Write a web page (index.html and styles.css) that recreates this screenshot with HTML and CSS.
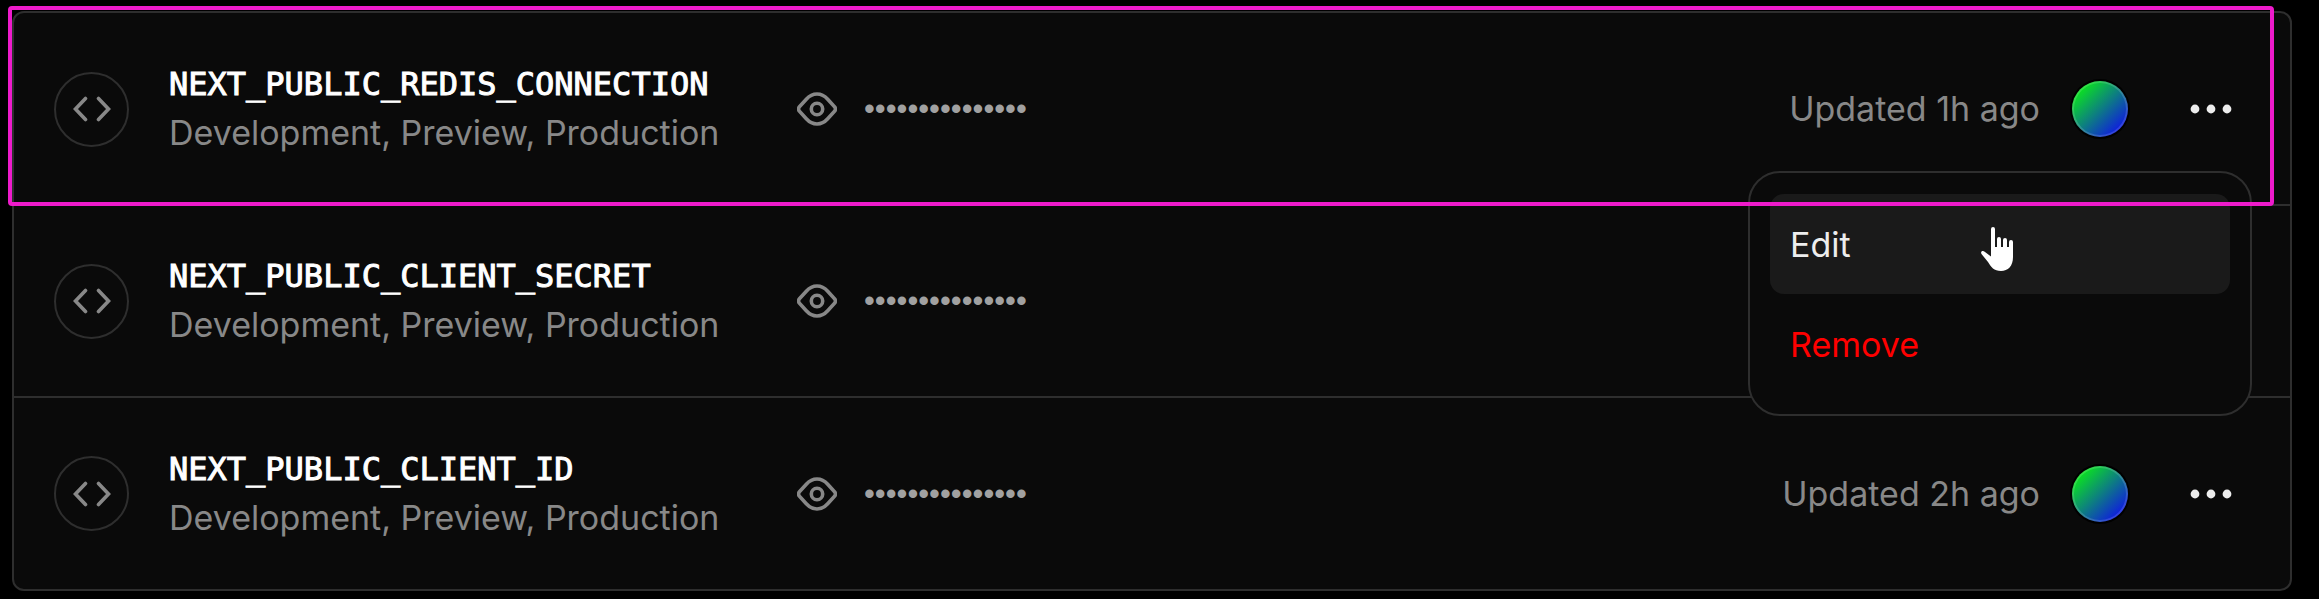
FILE: index.html
```html
<!DOCTYPE html>
<html lang="en">
<head>
<meta charset="utf-8">
<title>Environment Variables</title>
<link rel="stylesheet" href="styles.css">
</head>
<body>
<svg class="sprite" aria-hidden="true">
  <symbol id="code" viewBox="0 0 38 26"><path d="M12.500 2.500 L2.500 13 L12.500 23.500 M25.500 2.500 L35.500 13 L25.500 23.500" fill="none" stroke="currentColor" stroke-width="3.600" stroke-linejoin="miter" stroke-linecap="round"/></symbol>
  <symbol id="eye" viewBox="0 0 40 34"><path d="M2.200 15 L9.300 7.200 Q14 2 20 2 Q26 2 30.700 7.200 L37.800 15 Q39 17 37.800 19 L30.700 26.800 Q26 32 20 32 Q14 32 9.300 26.800 L2.200 19 Q1 17 2.200 15 Z" fill="none" stroke="currentColor" stroke-width="3.600"/><circle cx="20" cy="17" r="5.700" fill="none" stroke="currentColor" stroke-width="3.600"/></symbol>
  <symbol id="more" viewBox="0 0 42 10"><circle cx="5" cy="5" r="4.400" fill="currentColor"/><circle cx="21" cy="5" r="4.400" fill="currentColor"/><circle cx="37" cy="5" r="4.400" fill="currentColor"/></symbol>
</svg>
<ul class="env-list">
  <li class="env-row">
    <span class="badge"><svg class="icon-code"><use href="#code"/></svg></span>
    <div class="info">
      <div class="name">NEXT_PUBLIC_REDIS_CONNECTION</div>
      <div class="targets">Development, Preview, Production</div>
    </div>
    <div class="value">
      <button class="icon-button" type="button" aria-label="Reveal value"><svg class="icon-eye"><use href="#eye"/></svg></button>
      <span class="mask">•••••••••••••••</span>
    </div>
    <div class="meta">
      <span class="updated">Updated 1h ago</span>
      <span class="avatar"></span>
      <button class="icon-button" type="button" aria-label="More options"><svg class="icon-more"><use href="#more"/></svg></button>
    </div>
    <div class="menu" role="menu">
      <button class="menu-item active" type="button" role="menuitem">Edit</button>
      <button class="menu-item danger" type="button" role="menuitem">Remove</button>
      <svg class="pointer" viewBox="0 0 34 46" aria-hidden="true"><path d="M11 3 Q11 1 13 1 Q15 1 15 3 V21 H17 V13 Q17 11 19 11 Q21 11 21 13 V21 H23 V14 Q23 12 25 12 Q27 12 27 14 V21 H29 V16 Q29 14 31 14 Q33 14 33 16 V31 C33 40 28 45 21 45 C14 45 11 41 8 36 L1.500 28 C0 25 3 24 5 26 L11 30.500 Z"/></svg>
    </div>
    <div class="highlight"></div>
  </li>
  <li class="env-row">
    <span class="badge"><svg class="icon-code"><use href="#code"/></svg></span>
    <div class="info">
      <div class="name">NEXT_PUBLIC_CLIENT_SECRET</div>
      <div class="targets">Development, Preview, Production</div>
    </div>
    <div class="value">
      <button class="icon-button" type="button" aria-label="Reveal value"><svg class="icon-eye"><use href="#eye"/></svg></button>
      <span class="mask">•••••••••••••••</span>
    </div>
  </li>
  <li class="env-row">
    <span class="badge"><svg class="icon-code"><use href="#code"/></svg></span>
    <div class="info">
      <div class="name">NEXT_PUBLIC_CLIENT_ID</div>
      <div class="targets">Development, Preview, Production</div>
    </div>
    <div class="value">
      <button class="icon-button" type="button" aria-label="Reveal value"><svg class="icon-eye"><use href="#eye"/></svg></button>
      <span class="mask">•••••••••••••••</span>
    </div>
    <div class="meta">
      <span class="updated">Updated 2h ago</span>
      <span class="avatar"></span>
      <button class="icon-button" type="button" aria-label="More options"><svg class="icon-more"><use href="#more"/></svg></button>
    </div>
  </li>
</ul>
</body>
</html>
```

FILE: styles.css
```css
* { box-sizing: border-box; }

body {
  margin: 0;
  padding: 11px 27px 8px 12px;
  background: #000;
  color: #888;
  font-family: Inter, "Liberation Sans", sans-serif;
  font-size: 34px;
  line-height: 48px;
}

.sprite { position: absolute; width: 0; height: 0; }

.env-list {
  margin: 0;
  padding: 1px 0 0;
  list-style: none;
  background: #0a0a0a;
  border: 2px solid #2e2e2e;
  border-radius: 12px;
}

.env-row {
  position: relative;
  display: grid;
  grid-template-columns: 75px 588px 1fr auto;
  column-gap: 40px;
  align-items: center;
  min-height: 192px;
  padding: 0 58px 0 40px;
  border-bottom: 2px solid #2e2e2e;
}

.env-row:last-child {
  min-height: 191px;
  border-bottom: 0;
}

.badge {
  display: grid;
  place-items: center;
  width: 75px;
  height: 75px;
  border: 2px solid #2e2e2e;
  border-radius: 50%;
}

.icon-code { width: 38px; height: 26px; }

.name {
  color: #fff;
  font-family: "DejaVu Sans Mono", "Liberation Mono", monospace;
  font-size: 32px;
  -webkit-text-stroke: 1px #fff;
}

.targets { line-height: 50px; }

.targets, .updated { white-space: nowrap; }

.value {
  display: flex;
  align-items: center;
  gap: 27px;
}

.icon-button {
  display: flex;
  padding: 0;
  border: 0;
  background: none;
  color: inherit;
}

.icon-eye { width: 40px; height: 34px; }

.mask {
  color: #a1a1a1;
  font-family: "Liberation Sans", sans-serif;
  font-size: 31px;
}

.meta {
  display: flex;
  align-items: center;
}

.avatar {
  width: 56px;
  height: 56px;
  margin: 0 62px 0 32px;
  border: 2px solid rgba(255, 255, 255, 0.15);
  border-radius: 50%;
  background: linear-gradient(135deg, #0be31f 14%, #0f1ce0 86%) border-box;
  box-shadow: 0 0 0 2px #000;
}

.icon-more { width: 42px; height: 10px; color: #ededed; }

.menu {
  position: absolute;
  top: 157px;
  right: 38px;
  z-index: 1;
  width: 504px;
  padding: 21px 20px 20px;
  background: #0a0a0a;
  border: 2px solid #2e2e2e;
  border-radius: 32px;
}

.menu-item {
  display: block;
  width: 100%;
  padding: 27px 20px 25px;
  border: 0;
  border-radius: 14px;
  background: none;
  font: inherit;
  text-align: left;
}

.active { background: #1a1a1a; color: #ededed; }

.danger { color: #f00; }

.pointer {
  position: absolute;
  top: 53px;
  left: 230px;
  width: 34px;
  height: 46px;
  fill: #fff;
}

.highlight {
  position: absolute;
  top: -8px;
  right: 16px;
  bottom: -2px;
  left: -6px;
  z-index: 2;
  border: 4px solid #ee1bcb;
  border-radius: 4px;
  pointer-events: none;
}
```
